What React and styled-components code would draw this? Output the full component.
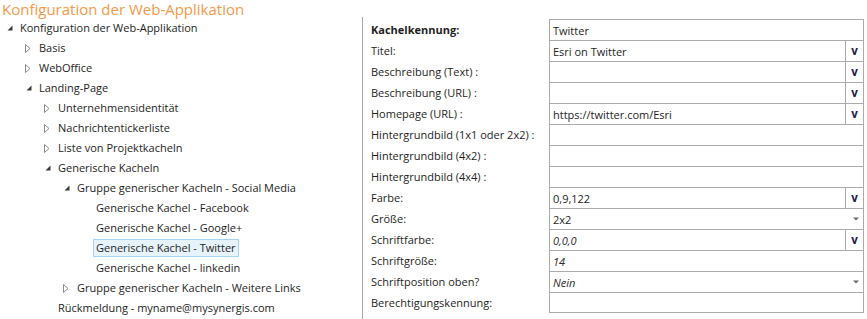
import React from "react";
import styled, { createGlobalStyle } from "styled-components";

const Global = createGlobalStyle`
  html, body { margin: 0; padding: 0; background: #fff; }
  body { font-family: "Open Sans", "Noto Sans", sans-serif; color: #1e1e1e; }
`;

const Page = styled.div`
  width: 867px;
  height: 319px;
  overflow: hidden;
  display: flex;
  flex-direction: column;
`;

const Title = styled.h1`
  margin: 0;
  padding: 1px 0 0 2px;
  height: 16px;
  line-height: 16px;
  font-size: 15px;
  font-weight: 400;
  color: #f2994a;
  white-space: nowrap;
`;

const Main = styled.div`
  display: flex;
  flex: 1;
`;

const TreePanel = styled.div`
  width: 362px;
  padding-top: 1px;
  display: flex;
  flex-direction: column;
`;

const Divider = styled.div`
  width: 1px;
  background: #a9a9a9;
`;

const TreeRow = styled.div`
  height: 20px;
  display: flex;
  align-items: center;
  padding-left: ${(p) => 6 + p.$level * 19}px;
  font-size: 11px;
  white-space: nowrap;
`;

const ArrowSlot = styled.span`
  width: 11px;
  height: 20px;
  display: flex;
  align-items: center;
  justify-content: flex-start;
  flex-shrink: 0;
`;

const TreeLabel = styled.span`
  height: 16px;
  line-height: 16px;
  padding: 0 2px;
  border: 1px solid ${(p) => (p.$selected ? "#a6d4f2" : "transparent")};
  background: ${(p) => (p.$selected ? "#e6f3fb" : "transparent")};
`;

const Expanded = () => (
  <svg width="6" height="6" viewBox="0 0 6 6" style={{ marginLeft: 1 }}>
    <polygon points="5.5,0.5 5.5,5.5 0.5,5.5" fill="#3a3a3a" />
  </svg>
);

const Collapsed = () => (
  <svg width="6" height="9" viewBox="0 0 6 9">
    <polygon points="0.5,0.5 5,4.5 0.5,8.5" fill="none" stroke="#8c8c8c" strokeWidth="1" />
  </svg>
);

const FormPanel = styled.div`
  padding-top: 2px;
  display: flex;
  flex-direction: column;
`;

const FormGrid = styled.div`
  display: grid;
  grid-template-columns: 186px 315px;
  grid-auto-rows: 21px;
`;

const FieldLabel = styled.div`
  padding-left: 8px;
  display: flex;
  align-items: center;
  font-size: 11px;
  font-weight: ${(p) => (p.$bold ? 700 : 400)};
  white-space: nowrap;
`;

const FieldCell = styled.div`
  display: flex;
  border: 1px solid #ababab;
  border-bottom: ${(p) => (p.$last ? "1px solid #ababab" : "none")};
  height: 21px;
  box-sizing: border-box;
`;

const FieldValue = styled.div`
  flex: 1;
  display: flex;
  align-items: center;
  padding-left: 3px;
  font-size: 11px;
  font-style: ${(p) => (p.$italic ? "italic" : "normal")};
  color: ${(p) => (p.$italic ? "#2b2b2b" : "#1e1e1e")};
  white-space: nowrap;
`;

const VButton = styled.div`
  width: 17px;
  border-left: 1px solid #ababab;
  display: flex;
  align-items: center;
  justify-content: center;
  font-size: 11.5px;
  font-weight: 700;
  color: #1c1c48;
  padding-bottom: 1px;
`;

const DropArrow = styled.div`
  width: 14px;
  display: flex;
  align-items: center;
  justify-content: center;
`;

const tree = [
  { level: 0, text: "Konfiguration der Web-Applikation", state: "open" },
  { level: 1, text: "Basis", state: "closed" },
  { level: 1, text: "WebOffice", state: "closed" },
  { level: 1, text: "Landing-Page", state: "open" },
  { level: 2, text: "Unternehmensidentität", state: "closed" },
  { level: 2, text: "Nachrichtentickerliste", state: "closed" },
  { level: 2, text: "Liste von Projektkacheln", state: "closed" },
  { level: 2, text: "Generische Kacheln", state: "open" },
  { level: 3, text: "Gruppe generischer Kacheln - Social Media", state: "open" },
  { level: 4, text: "Generische Kachel - Facebook" },
  { level: 4, text: "Generische Kachel - Google+" },
  { level: 4, text: "Generische Kachel - Twitter", selected: true },
  { level: 4, text: "Generische Kachel - linkedin" },
  { level: 3, text: "Gruppe generischer Kacheln - Weitere Links", state: "closed" },
  { level: 2, text: "Rückmeldung - myname@mysynergis.com" },
];

const fields = [
  { label: "Kachelkennung:", bold: true, value: "Twitter" },
  { label: "Titel:", value: "Esri on Twitter", kind: "v" },
  { label: "Beschreibung (Text) :", value: "", kind: "v" },
  { label: "Beschreibung (URL) :", value: "", kind: "v" },
  { label: "Homepage (URL) :", value: "https://twitter.com/Esri", kind: "v" },
  { label: "Hintergrundbild (1x1 oder 2x2) :", value: "" },
  { label: "Hintergrundbild (4x2) :", value: "" },
  { label: "Hintergrundbild (4x4) :", value: "" },
  { label: "Farbe:", value: "0,9,122", kind: "v" },
  { label: "Größe:", value: "2x2", kind: "drop" },
  { label: "Schriftfarbe:", value: "0,0,0", italic: true, kind: "v" },
  { label: "Schriftgröße:", value: "14", italic: true },
  { label: "Schriftposition oben?", value: "Nein", italic: true, kind: "drop" },
  { label: "Berechtigungskennung:", value: "" },
];

export default function App() {
  return (
    <Page>
      <Global />
      <Title>Konfiguration der Web-Applikation</Title>
      <Main>
        <TreePanel>
          {tree.map((n, i) => (
            <TreeRow key={i} $level={n.level}>
              <ArrowSlot>
                {n.state === "open" && <Expanded />}
                {n.state === "closed" && <Collapsed />}
              </ArrowSlot>
              <TreeLabel $selected={n.selected}>{n.text}</TreeLabel>
            </TreeRow>
          ))}
        </TreePanel>
        <Divider />
        <FormPanel>
          <FormGrid>
            {fields.map((f, i) => (
              <React.Fragment key={i}>
                <FieldLabel $bold={f.bold}>{f.label}</FieldLabel>
                <FieldCell $last={i === fields.length - 1}>
                  <FieldValue $italic={f.italic}>{f.value}</FieldValue>
                  {f.kind === "v" && <VButton>v</VButton>}
                  {f.kind === "drop" && (
                    <DropArrow>
                      <svg width="6" height="4" viewBox="0 0 6 4">
                        <polygon points="0,0.5 6,0.5 3,3.5" fill="#6a6a6a" />
                      </svg>
                    </DropArrow>
                  )}
                </FieldCell>
              </React.Fragment>
            ))}
          </FormGrid>
        </FormPanel>
      </Main>
    </Page>
  );
}
